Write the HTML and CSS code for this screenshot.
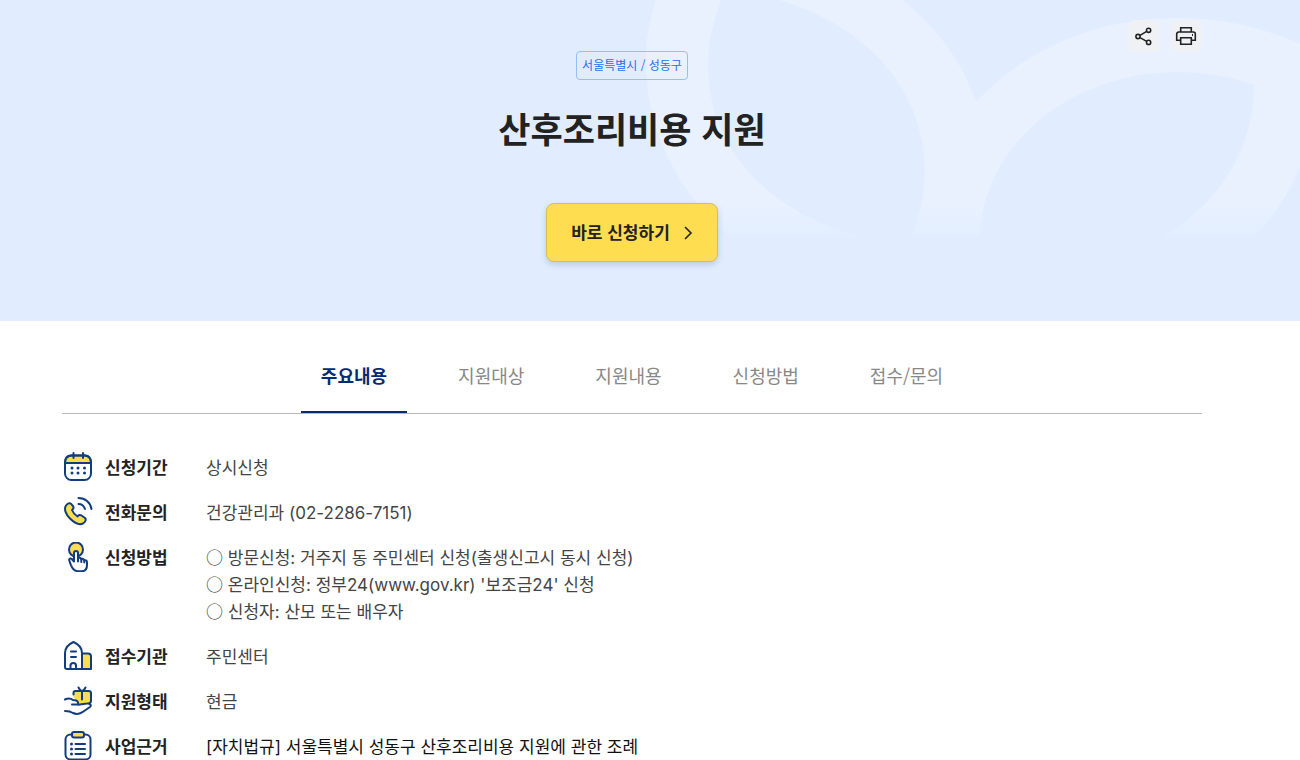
FILE: index.html
```html
<!DOCTYPE html>
<html lang="ko">
<head>
<meta charset="utf-8">
<meta name="viewport" content="width=device-width, initial-scale=1">
<title>산후조리비용 지원</title>
<link rel="stylesheet" href="styles.css">
</head>
<body>
<header class="hero">
  <svg class="hero-deco" viewBox="646 0 654 240" aria-hidden="true">
    <defs>
      <linearGradient id="fade" x1="0" y1="0" x2="0" y2="1">
        <stop offset="0" stop-color="#e1edff" stop-opacity="0"/>
        <stop offset="1" stop-color="#e1edff"/>
      </linearGradient>
    </defs>
    <path fill="#e9f1ff" d="M656 0C643 40 643 80 654 120C666 165 695 208 733 240H1252C1274 216 1290 192 1300 166V44C1262 27 1220 18 1178 18C1099 18 1028 47 976 102C962 62 938 28 902 0Z"/>
    <path fill="#e1edff" d="M721 0C706 38 703 82 718 122C740 181 802 228 880 240H910C920 216 925 192 925 168C923 85 862 24 779 0Z"/>
    <path fill="#e1edff" d="M980 240C980 146 1070 72 1178 72C1206 72 1232 77 1254 85C1254 150 1217 209 1156 240Z"/>
    <rect x="646" y="204" width="654" height="37" fill="url(#fade)"/>
  </svg>
  <div class="hero-actions">
    <button class="icon-button" type="button" aria-label="공유">
      <svg width="22" height="22" viewBox="0 0 22 22" fill="none" stroke="#222" stroke-width="1.6" aria-hidden="true">
        <circle cx="5" cy="11.5" r="2.1"/><circle cx="15.6" cy="5.3" r="2.1"/><circle cx="15.6" cy="17.4" r="2.1"/>
        <path d="M7 10.4l6.700-4M7 12.6l6.700 3.800"/>
      </svg>
    </button>
    <button class="icon-button" type="button" aria-label="인쇄">
      <svg width="22" height="22" viewBox="0 0 22 22" fill="none" stroke="#222" stroke-width="1.6" aria-hidden="true">
        <path d="M5.700 7V2.700h10.600V7M5.700 15.300H1.700V9a2 2 0 0 1 2-2h14.600a2 2 0 0 1 2 2v6.300h-4"/>
        <path d="M5.700 12.700h10.600v6.600H5.700z"/><path d="M17.500 9v2" stroke-width="1"/>
      </svg>
    </button>
  </div>
  <div class="hero-body">
    <span class="badge">서울특별시 / 성동구</span>
    <h1 class="title">산후조리비용 지원</h1>
    <button class="apply" type="button">바로 신청하기
      <svg class="chevron" width="10" height="14" viewBox="0 0 10 14" fill="none" stroke="#222" stroke-width="1.6" aria-hidden="true"><path d="M2 1l6 6-6 6"/></svg>
    </button>
  </div>
</header>
<main class="content">
  <nav class="tabs">
    <a class="tab tab-active" href="#summary" aria-current="true">주요내용</a>
    <a class="tab" href="#target">지원대상</a>
    <a class="tab" href="#benefit">지원내용</a>
    <a class="tab" href="#method">신청방법</a>
    <a class="tab" href="#contact">접수/문의</a>
  </nav>
  <dl class="summary" id="summary">
    <div class="row">
      <dt class="label">
        <svg class="icon" viewBox="0 0 30 30" aria-hidden="true">
          <path class="yellow" d="M2 11C2 6 4 3.500 8 3.500h14c4 0 6 2.500 6 7.500z"/>
          <rect x="2" y="3.500" width="26" height="24.500" rx="6.500"/>
          <path d="M2 11h26M10.500 1v5M20 1v5"/>
          <path class="dots" d="M9 16h0M15 16h0M21.500 16h0M9 21h0M15 21h0M21.500 21h0"/>
        </svg>신청기간</dt>
      <dd class="value">상시신청</dd>
    </div>
    <div class="row">
      <dt class="label">
        <svg class="icon" viewBox="0 0 30 30" aria-hidden="true">
          <path class="yellow" d="M3 8.500C.5 12 3 17.500 7 21.500C11 25.500 16 28.500 20 26.500C22.500 25 23.500 22.500 22 21L18.500 18.500C17 17.500 15.500 18 14.500 19.500C12 18 10 15.500 9 13C10.500 12 11 10.500 10 9L8 6.800C6.500 5.500 4.500 6.500 3 8.500Z"/>
          <path d="M15.500 1C22 1 27.500 5.500 28.500 12M15.500 7C18.500 7 21 9 22 12"/>
        </svg>전화문의</dt>
      <dd class="value">건강관리과 (02-2286-7151)</dd>
    </div>
    <div class="row">
      <dt class="label">
        <svg class="icon" viewBox="0 0 30 30" aria-hidden="true">
          <circle class="yellow" cx="13" cy="7.500" r="7"/>
          <path class="white" d="M11 19.500V11a2 2 0 0 1 4 0v5.500c.5-1 3-1 3.300.8c.7-.8 2.700-.5 3 1c1-.4 2.700.2 2.700 2V23c0 4-2 6.300-5.500 6.300h-3c-4 0-6-2.500-7.500-6L6.300 18.500c-.6-1.700 1.200-2.700 2.500-1.500z"/>
          <path d="M15 16.500v3M18.300 17.500v2.500M21.300 18.500v2"/>
        </svg>신청방법</dt>
      <dd class="value"><span class="mark">○</span> 방문신청: 거주지 동 주민센터 신청(출생신고시 동시 신청)<br><span class="mark">○</span> 온라인신청: 정부24(www.gov.kr) '보조금24' 신청<br><span class="mark">○</span> 신청자: 산모 또는 배우자</dd>
    </div>
    <div class="row">
      <dt class="label">
        <svg class="icon" viewBox="0 0 30 30" aria-hidden="true">
          <path class="yellow" d="M19 12.500h6c2 0 3 1 3 3v12.500h-9z"/>
          <path class="white" d="M19 28H4c-1.500 0-2-1-2-2V12C2 7 6 3 10.500 1C15 3 19 7 19 12z"/>
          <path d="M7.500 28V24.500c0-3.500 5.500-3.500 5.500 0V28M8 10.500h5M8 16h5"/>
        </svg>접수기관</dt>
      <dd class="value">주민센터</dd>
    </div>
    <div class="row">
      <dt class="label">
        <svg class="icon" viewBox="0 0 30 30" aria-hidden="true">
          <path class="fill" d="M10.500 6.500l2-1.500h14l1.500 2v9l-3 2h-9l-2-4-3.500-2.500z"/>
          <path d="M10.500 8.500V7c0-1.500.5-2 2-2h13c1.500 0 2.500 1 2.500 2v8c0 1-.5 1.700-1.500 2M19 13.500V5M19 5c-1.500 0-2.500-1.500-3.500-3.500M19 5c1.500 0 2.500-1.500 3.500-3.500"/>
          <path d="M2 13.500c3-1.500 5.500-1.500 8 .5c3.500 0 6 1.500 5 4.500H9M15 18.700l9-1.200c3-.5 5 2 3 3.500C21 25 16 30 10 27C7 25 5 25 2 25"/>
        </svg>지원형태</dt>
      <dd class="value">현금</dd>
    </div>
    <div class="row">
      <dt class="label">
        <svg class="icon" viewBox="0 0 30 30" aria-hidden="true">
          <rect x="2.500" y="3.500" width="25" height="25" rx="5"/>
          <rect class="yellow" x="9" y="1" width="12" height="5.500" rx="2"/>
          <path d="M12.500 13h9.500M12.500 18h9.500M12.500 23h9.500"/>
          <path class="dots" d="M8.500 13h0M8.500 18h0M8.500 23h0"/>
        </svg>사업근거</dt>
      <dd class="value value-law">[자치법규] 서울특별시 성동구 산후조리비용 지원에 관한 조례</dd>
    </div>
  </dl>
</main>
</body>
</html>
```
FILE: styles.css
```css
* {
  box-sizing: border-box;
}

body {
  margin: 0;
  background: #fff;
  color: #222;
  font-family: "Noto Sans CJK KR", sans-serif;
  font-size: 17px;
  line-height: 27px;
}

button {
  font: inherit;
  color: inherit;
  cursor: pointer;
}

.hero {
  position: relative;
  padding: 51px 98px 59px 62px;
  background: #e1edff;
}

.hero-deco {
  position: absolute;
  top: 0;
  right: 0;
  width: 654px;
  height: 240px;
}

.hero-actions {
  position: absolute;
  top: 20px;
  right: 98px;
  display: flex;
  gap: 10px;
}

.icon-button {
  display: grid;
  place-items: center;
  width: 32px;
  height: 32px;
  padding: 0;
  border: 0;
  border-radius: 8px;
  background: #f0f1f4;
}

.hero-body {
  position: relative;
  display: flex;
  flex-direction: column;
  align-items: center;
}

.badge {
  padding: 0 5px 2px;
  border: 1px solid #93c0f5;
  border-radius: 4px;
  color: #256ef4;
  font-size: 12px;
  line-height: 25px;
}

.title {
  margin: 22px 0 49px;
  font-size: 35px;
  font-weight: 700;
  line-height: 52px;
}

.apply {
  display: flex;
  align-items: center;
  gap: 13px;
  padding: 14px 24px 16px;
  border: 1px solid #d9bf4c;
  border-radius: 8px;
  background: #ffdd50;
  box-shadow: 0 3px 6px rgba(40, 60, 100, 0.2);
  font-weight: 700;
}

.chevron {
  margin-top: 2px;
}

.content {
  padding: 24px 98px 0 62px;
}

.tabs {
  display: flex;
  justify-content: center;
  gap: 31px;
  border-bottom: 1px solid #b8b8b8;
}

.tab {
  padding: 17px 20px 22px;
  border-bottom: 2px solid transparent;
  color: #888;
  font-size: 18px;
  text-decoration: none;
}

.tab-active {
  border-bottom-color: #052b73;
  color: #052b73;
  font-weight: 700;
}

.summary {
  display: flex;
  flex-direction: column;
  gap: 18px;
  margin: 0;
  padding-top: 41px;
  font-family: Inter, "Noto Sans CJK KR", sans-serif;
}

.row {
  display: grid;
  grid-template-columns: 144px 1fr;
}

.label {
  display: flex;
  align-items: center;
  gap: 12px;
  height: 27px;
  padding-left: 1px;
  font-weight: 700;
}

.icon {
  flex: none;
  width: 30px;
  height: 30px;
  margin-bottom: 3px;
  fill: none;
  stroke: #123c80;
  stroke-width: 2;
  stroke-linecap: round;
  stroke-linejoin: round;
}

.icon .yellow {
  fill: #ffdd50;
}

.icon .white {
  fill: #fff;
}

.icon .fill {
  fill: #ffdd50;
  stroke: none;
}

.icon .dots {
  stroke-width: 3;
}

.value {
  margin: 0;
  color: #444;
}

.value-law {
  color: #111;
}

.mark {
  font-family: "Noto Sans CJK KR", sans-serif;
  line-height: 1;
}
```
